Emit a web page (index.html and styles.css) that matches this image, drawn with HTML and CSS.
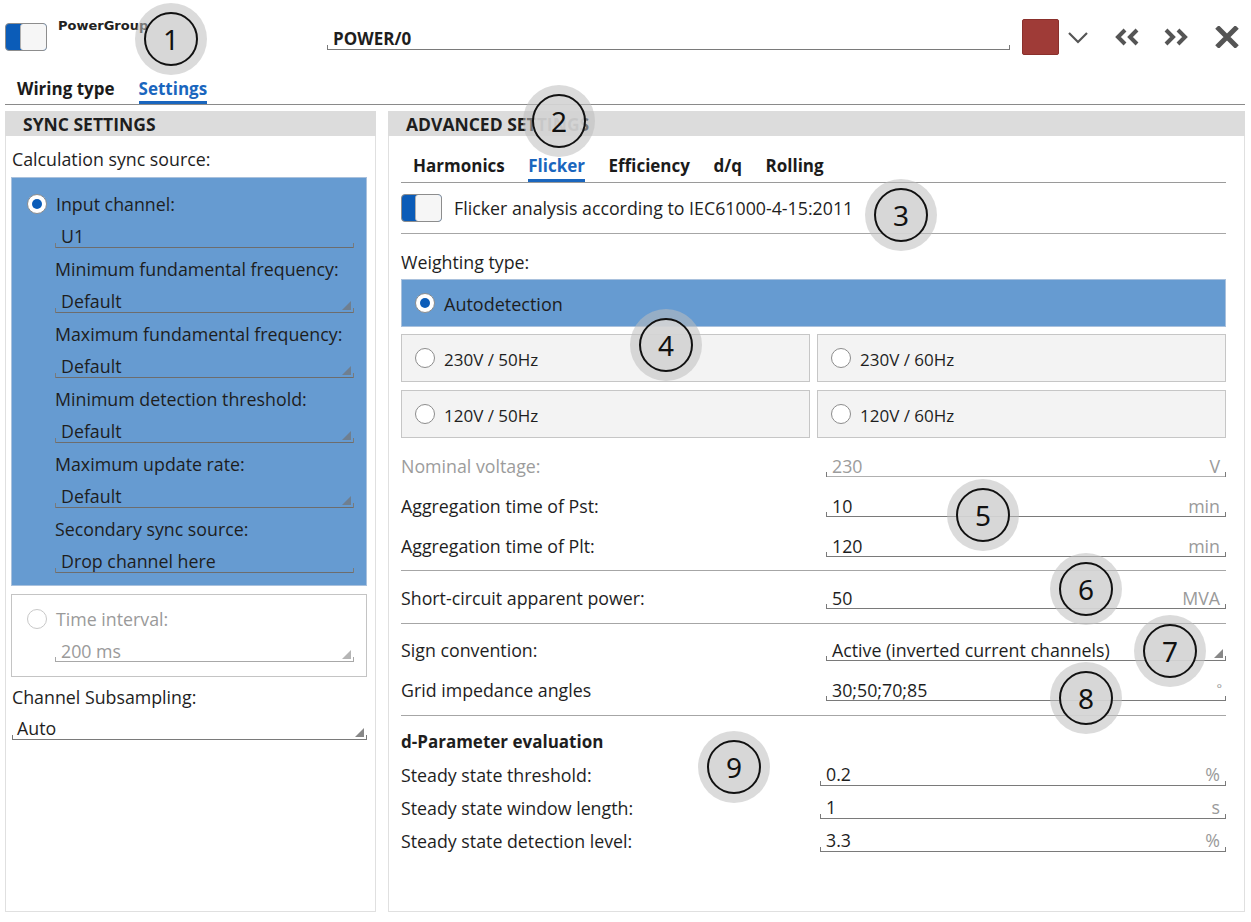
FILE: index.html
```html
<!DOCTYPE html>
<html lang="en">
<head>
<meta charset="utf-8">
<title>PowerGroup settings</title>
<link rel="stylesheet" href="styles.css">
</head>
<body>
<div class="app">
  <header class="topbar">
    <div class="toggle"><span class="knob"></span></div>
    <div class="group-name">PowerGroup</div>
    <div class="field name-field"><span class="val">POWER/0</span></div>
    <div class="swatch"></div>
    <svg class="ico chev" viewBox="0 0 22 14" width="22" height="14"><polyline points="2,2 11,11 20,2" fill="none" stroke="#555" stroke-width="2.2"/></svg>
    <svg class="ico rew" viewBox="0 0 27 18" width="27" height="18"><polyline points="11,2 4,9 11,16" fill="none" stroke="#555" stroke-width="4"/><polyline points="23,2 16,9 23,16" fill="none" stroke="#555" stroke-width="4"/></svg>
    <svg class="ico fwd" viewBox="0 0 27 18" width="27" height="18"><polyline points="4,2 11,9 4,16" fill="none" stroke="#555" stroke-width="4"/><polyline points="16,2 23,9 16,16" fill="none" stroke="#555" stroke-width="4"/></svg>
    <svg class="ico close" viewBox="0 0 24 22" width="24" height="22"><path d="M2 1 L22 21 M22 1 L2 21" stroke="#555" stroke-width="5" fill="none"/></svg>
  </header>

  <nav class="main-tabs">
    <span class="tab">Wiring type</span>
    <span class="tab active">Settings</span>
  </nav>

  <main class="panels">
    <section class="panel sync">
      <div class="panel-head">SYNC SETTINGS</div>
      <div class="sync-body">
        <div class="plain-label">Calculation sync source:</div>

        <div class="choice-box selected">
          <div class="radio-row"><span class="radio on"></span><span>Input channel:</span></div>
          <div class="sub">
            <div class="srow"><div class="field"><span class="val">U1</span></div></div>
            <div class="srow">Minimum fundamental frequency:</div>
            <div class="srow"><div class="field"><span class="val">Default</span><span class="tri"></span></div></div>
            <div class="srow">Maximum fundamental frequency:</div>
            <div class="srow"><div class="field"><span class="val">Default</span><span class="tri"></span></div></div>
            <div class="srow">Minimum detection threshold:</div>
            <div class="srow"><div class="field"><span class="val">Default</span><span class="tri"></span></div></div>
            <div class="srow">Maximum update rate:</div>
            <div class="srow"><div class="field"><span class="val">Default</span><span class="tri"></span></div></div>
            <div class="srow">Secondary sync source:</div>
            <div class="srow"><div class="field"><span class="val">Drop channel here</span></div></div>
          </div>
        </div>

        <div class="choice-box disabled">
          <div class="radio-row"><span class="radio"></span><span>Time interval:</span></div>
          <div class="sub">
            <div class="srow"><div class="field"><span class="val">200 ms</span><span class="tri"></span></div></div>
          </div>
        </div>

        <div class="plain-label subsampling">Channel Subsampling:</div>
        <div class="srow"><div class="field flush"><span class="val">Auto</span><span class="tri"></span></div></div>
      </div>
    </section>

    <section class="panel advanced">
      <div class="panel-head">ADVANCED SETTINGS</div>
      <div class="adv-body">
        <nav class="sub-tabs">
          <span class="tab">Harmonics</span>
          <span class="tab active">Flicker</span>
          <span class="tab">Efficiency</span>
          <span class="tab">d/q</span>
          <span class="tab">Rolling</span>
        </nav>

        <div class="enable-row">
          <div class="toggle small"><span class="knob"></span></div>
          <span>Flicker analysis according to IEC61000-4-15:2011</span>
        </div>

        <div class="plain-label weighting">Weighting type:</div>
        <div class="option wide selected"><span class="radio on"></span><span class="opt-text big">Autodetection</span></div>
        <div class="option-grid">
          <div class="option"><span class="radio"></span><span class="opt-text">230V / 50Hz</span></div>
          <div class="option"><span class="radio"></span><span class="opt-text">230V / 60Hz</span></div>
          <div class="option"><span class="radio"></span><span class="opt-text">120V / 50Hz</span></div>
          <div class="option"><span class="radio"></span><span class="opt-text">120V / 60Hz</span></div>
        </div>

        <div class="values">
          <div class="vrow muted"><span class="vlabel">Nominal voltage:</span><div class="field vfield"><span class="val">230</span><span class="unit">V</span></div></div>
          <div class="vrow"><span class="vlabel">Aggregation time of Pst:</span><div class="field vfield"><span class="val">10</span><span class="unit">min</span></div></div>
          <div class="vrow"><span class="vlabel">Aggregation time of Plt:</span><div class="field vfield"><span class="val">120</span><span class="unit">min</span></div></div>
        </div>
        <div class="sep sep-a"></div>
        <div class="vrow one"><span class="vlabel">Short-circuit apparent power:</span><div class="field vfield"><span class="val">50</span><span class="unit">MVA</span></div></div>
        <div class="sep sep-b"></div>
        <div class="vrow two"><span class="vlabel">Sign convention:</span><div class="field vfield"><span class="val">Active (inverted current channels)</span><span class="tri"></span></div></div>
        <div class="vrow"><span class="vlabel">Grid impedance angles</span><div class="field vfield"><span class="val">30;50;70;85</span><span class="unit deg">°</span></div></div>
        <div class="sep sep-c"></div>
        <div class="section-title">d-Parameter evaluation</div>
        <div class="vrow short"><span class="vlabel">Steady state threshold:</span><div class="field sfield"><span class="val">0.2</span><span class="unit">%</span></div></div>
        <div class="vrow short"><span class="vlabel">Steady state window length:</span><div class="field sfield"><span class="val">1</span><span class="unit">s</span></div></div>
        <div class="vrow short"><span class="vlabel">Steady state detection level:</span><div class="field sfield"><span class="val">3.3</span><span class="unit">%</span></div></div>
      </div>
    </section>
  </main>

  <div class="marker m1"><span class="ring">1</span></div>
  <div class="marker m2"><span class="ring">2</span></div>
  <div class="marker m3"><span class="ring">3</span></div>
  <div class="marker m4"><span class="ring">4</span></div>
  <div class="marker m5"><span class="ring">5</span></div>
  <div class="marker m6"><span class="ring">6</span></div>
  <div class="marker m7"><span class="ring">7</span></div>
  <div class="marker m8"><span class="ring">8</span></div>
  <div class="marker m9"><span class="ring">9</span></div>
</div>
</body>
</html>
```

FILE: styles.css
```css
* { box-sizing: border-box; }
html, body { margin: 0; padding: 0; background: #fff; }
body {
  font-family: "Open Sans", Lato, "Liberation Sans", sans-serif;
  font-size: 17.8px;
  color: #1e1e1e;
}
.app { position: relative; width: 1251px; height: 922px; overflow: hidden; }

/* top bar */
.topbar {
  display: flex;
  align-items: center;
  height: 74px;
}
.toggle {
  display: flex;
  justify-content: flex-end;
  width: 42px;
  height: 28px;
  margin-left: 5px;
  background: #0b5cb8;
  border: 1px solid #8d8d8d;
  border-radius: 4px;
  flex: none;
}
.toggle .knob {
  width: 26px;
  height: 100%;
  background: #f6f6f6;
  border-left: 1px solid #b0b0b0;
  border-radius: 3px;
}
.group-name {
  align-self: flex-start;
  margin: 18px 0 0 11px;
  width: 269px;
  flex: none;
  font-family: "DejaVu Sans", sans-serif;
  font-weight: bold;
  font-size: 13px;
  color: #222;
}
.field {
  position: relative;
  display: flex;
  align-items: center;
  height: 22px;
  border-bottom: 1px solid #7a7a7a;
}
.field::before, .field::after {
  content: "";
  position: absolute;
  bottom: -1px;
  width: 1px;
  height: 5px;
  background: #7a7a7a;
}
.field::before { left: 0; }
.field::after { right: 0; }
.field .val { padding-left: 6px; white-space: nowrap; }
.name-field {
  width: 683px;
  flex: none;
  margin-top: 3px;
  font-weight: bold;
  font-size: 17px;
}
.name-field .val { padding-left: 6px; }
.swatch {
  width: 37px;
  height: 36px;
  margin-left: 12px;
  background: #9f3b37;
  border: 1px solid #8a302c;
  border-radius: 2px;
  flex: none;
}
.ico { flex: none; display: block; }
.chev { margin-left: 8px; margin-top: 2px; }
.rew { margin-left: 25px; }
.fwd { margin-left: 21px; }
.close { margin-left: 26px; }

/* main tabs */
.main-tabs {
  display: flex;
  gap: 24px;
  margin: 0 6px 0 5px;
  padding-left: 12px;
  border-bottom: 1px solid #8a8a8a;
  height: 31px;
}
.tab {
  font-weight: bold;
  font-size: 17px;
  border-bottom: 3px solid transparent;
  color: #1b1b1b;
  white-space: nowrap;
}
.main-tabs .tab { padding-top: 2px; line-height: 25px; }
.tab.active { color: #1a66be; border-bottom-color: #1a66be; }

/* panels */
.panels {
  display: flex;
  gap: 12px;
  padding: 6px 6px 0 5px;
}
.panel {
  height: 801px;
  border: 1px solid #e0e0e0;
  background: #fff;
}
.sync { width: 371px; flex: none; }
.advanced { flex: 1; }
.panel-head {
  height: 25px;
  line-height: 26px;
  margin: -1px -1px 0;
  padding-left: 18px;
  background: #dcdcdc;
  font-weight: bold;
  font-size: 17.5px;
  color: #1e1e1e;
  white-space: nowrap;
}

/* sync panel */
.sync-body { padding: 11px 8px 0 6px; }
.plain-label { line-height: 24px; white-space: nowrap; }
.sync-body > .plain-label:first-child { margin-bottom: 6px; }
.choice-box {
  margin-left: -1px;
  padding: 9px 12px 7px 15px;
  border: 1px solid #c4c4c4;
}
.choice-box.selected { background: #669bd1; border-color: #a9c1dd; }
.choice-box.disabled { margin-top: 8px; padding-top: 8px; padding-bottom: 8px; color: #9a9a9a; }
.radio-row {
  display: flex;
  align-items: center;
  gap: 9px;
  height: 33.5px;
}
.choice-box.disabled .radio-row { height: 32px; }
.radio {
  display: flex;
  align-items: center;
  justify-content: center;
  width: 20px;
  height: 20px;
  border-radius: 50%;
  background: #fff;
  border: 1px solid #8c8c8c;
  flex: none;
}
.radio.on::after {
  content: "";
  width: 10px;
  height: 10px;
  border-radius: 50%;
  background: #0b5cb8;
}
.choice-box.disabled .radio { border-color: #c8c8c8; }
.sub { margin-left: 28px; }
.srow {
  display: flex;
  align-items: center;
  height: 32.5px;
  white-space: nowrap;
}
.srow .field { flex: 1; }
.choice-box.selected .field { border-bottom-color: #6d6d6d; }
.choice-box.disabled .field { border-bottom-color: #a8a8a8; }
.choice-box.disabled .field::before, .choice-box.disabled .field::after { background: #a8a8a8; }
.tri {
  width: 0;
  height: 0;
  margin-left: auto;
  margin-right: 3px;
  align-self: flex-end;
  margin-bottom: 2px;
  border-style: solid;
  border-width: 0 0 9px 9px;
  border-color: transparent transparent #888 transparent;
}
.choice-box.selected .tri { border-bottom-color: #6f7f90; }
.choice-box.disabled .tri { border-bottom-color: #b5b5b5; }
.subsampling { margin-top: 4px; line-height: 32px; }
.field.flush .val { padding-left: 5px; }

/* advanced panel */
.adv-body { padding: 15px 18px 0 12px; }
.sub-tabs {
  display: flex;
  gap: 23.5px;
  height: 32px;
  padding-left: 12px;
  border-bottom: 1px solid #9a9a9a;
}
.sub-tabs .tab { padding-top: 2px; line-height: 26px; }
.enable-row {
  display: flex;
  align-items: center;
  gap: 12px;
  height: 51px;
  border-bottom: 1px solid #a6a6a6;
  white-space: nowrap;
}
.toggle.small { margin-left: 0; width: 41px; height: 28px; }
.toggle.small .knob { width: 26px; }
.weighting { margin-top: 16px; margin-bottom: 5px; }
.option {
  display: flex;
  align-items: center;
  gap: 9px;
  height: 48px;
  padding-left: 13px;
  background: #f3f3f3;
  border: 1px solid #c6c6c6;
}
.option.selected { background: #669bd1; border-color: #a9c1dd; }
.opt-text { font-size: 17px; padding-top: 2px; }
.opt-text.big { font-size: 18px; padding-top: 1px; }
.option-grid {
  display: grid;
  grid-template-columns: 1fr 1fr;
  gap: 8px 7px;
  margin-top: 7px;
}
.values { margin-top: 8px; }
.vrow {
  display: flex;
  align-items: center;
  height: 40px;
  white-space: nowrap;
}
.vlabel { flex: 1; }
.vfield { width: 400px; flex: none; }
.sfield { width: 406px; flex: none; }
.unit { margin-left: auto; padding-right: 6px; color: #9a9a9a; }
.unit.deg { align-self: flex-start; font-size: 13px; padding-right: 4px; }
.vrow.muted .vlabel, .vrow.muted .val { color: #9c9c9c; }
.vrow.muted .field { border-bottom-color: #b0b0b0; }
.sep { border-top: 1px solid #a6a6a6; }
.sep-a { margin-top: 4px; }
.vrow.one { margin-top: 7px; }
.sep-b { margin-top: 5px; }
.vrow.two { margin-top: 6px; }
.sep-c { margin-top: 5px; }
.section-title { margin-top: 10px; height: 32px; line-height: 32px; font-weight: bold; font-size: 17px; }
.vrow.short { height: 33px; }

/* annotation markers (overlay) */
.marker {
  position: absolute;
  width: 72px;
  height: 72px;
  border-radius: 50%;
  background: rgba(190, 190, 190, 0.55);
  display: flex;
  align-items: center;
  justify-content: center;
}
.ring {
  display: flex;
  align-items: center;
  justify-content: center;
  width: 54px;
  height: 54px;
  border-radius: 50%;
  border: 2px solid #111;
  background: rgba(214, 214, 214, 0.85);
  font-family: "Noto Sans", sans-serif;
  font-size: 28px;
  color: #111;
}
.m1 { left: 135px; top: 3px; }
.m2 { left: 523px; top: 85px; }
.m3 { left: 865px; top: 179px; }
.m4 { left: 630px; top: 309px; }
.m5 { left: 947px; top: 479px; }
.m6 { left: 1050px; top: 553px; }
.m7 { left: 1134px; top: 615px; }
.m8 { left: 1050px; top: 662px; }
.m9 { left: 698px; top: 731px; }
```
